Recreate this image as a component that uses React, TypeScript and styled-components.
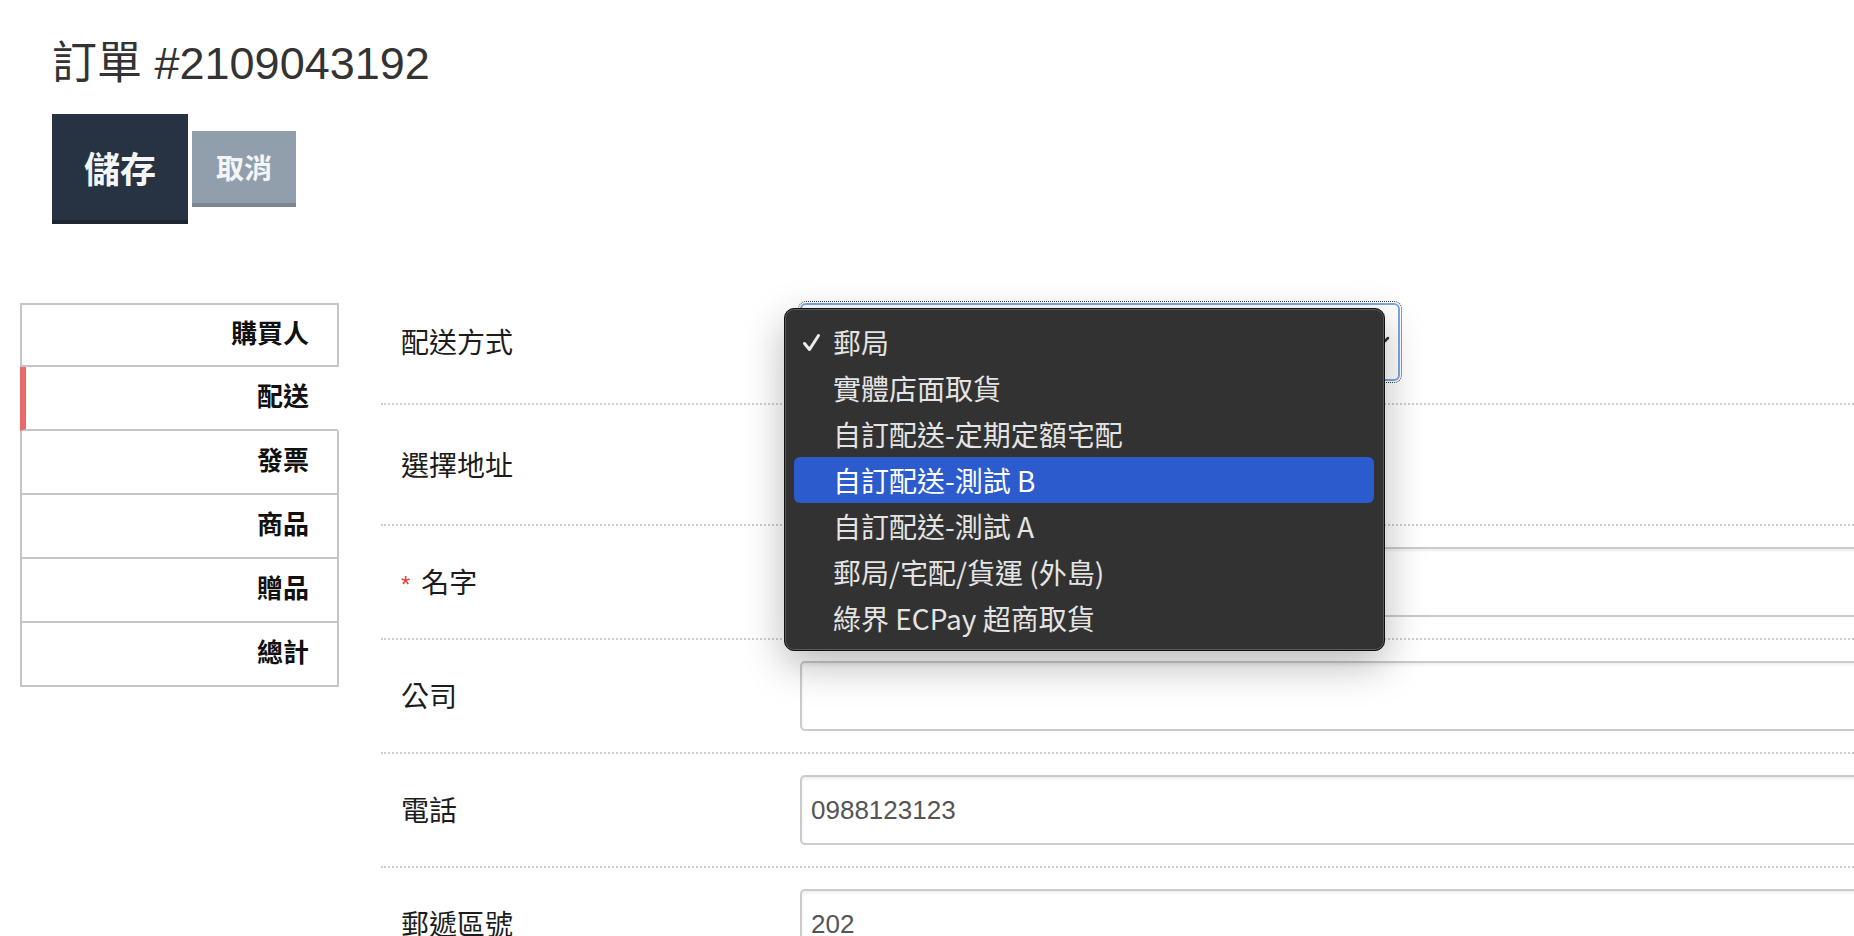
import React from 'react'
import styled, { createGlobalStyle, css } from 'styled-components'

//styling:
const GlobalStyle = createGlobalStyle`
  html, body {
    margin: 0;
    padding: 0;
    background: #fff;
    overflow: hidden;
  }
  body {
    font-family: "Liberation Sans", "Noto Sans CJK TC", sans-serif;
    color: #222;
  }
`
const Page = styled.div`
  width: 1854px;
  height: 936px;
  overflow: hidden;
`
const Header = styled.header`
  padding: 38px 0 0 52px;
`
const Title = styled.h1`
  margin: 0;
  font-size: 45px;
  line-height: 52px;
  font-weight: 400;
  color: #333;
`
const Actions = styled.div`
  display: flex;
  align-items: center;
  gap: 4px;
  margin-top: 24px;
`
const Button = styled.button<{ $primary?: boolean }>`
  box-sizing: border-box;
  display: flex;
  align-items: center;
  justify-content: center;
  border: none;
  padding: 0;
  font-family: "Noto Sans CJK TC", sans-serif;
  font-weight: 700;
  color: #f4f5f7;
  cursor: pointer;
  ${p => p.$primary ? css`
    width: 136px;
    height: 110px;
    font-size: 36px;
    background: #273342;
    border-bottom: 4px solid #1d2631;
  ` : css`
    width: 104px;
    height: 76px;
    font-size: 28px;
    background: #919fac;
    border-bottom: 4px solid #7b8692;
  `}
`
const Main = styled.main`
  display: flex;
  align-items: flex-start;
  margin-top: 79px;
`
const Tabs = styled.nav`
  flex: none;
  width: 319px;
  margin-left: 20px;
  display: flex;
  flex-direction: column;
`
const Tab = styled.div<{ $active?: boolean }>`
  box-sizing: border-box;
  height: 64px;
  display: flex;
  align-items: center;
  justify-content: flex-end;
  padding: 0 28px 8px 0;
  border: 2px solid #c5c5c5;
  border-top: none;
  font-family: "Noto Sans CJK TC", sans-serif;
  font-size: 26px;
  font-weight: 700;
  color: #111;
  &:first-child {
    border-top: 2px solid #c5c5c5;
  }
  ${p => p.$active && css`
    border-left: 6px solid #e96a6a;
    border-right-color: transparent;
  `}
`
const Form = styled.section`
  flex: none;
  width: 1600px;
  margin-left: 42px;
`
const Row = styled.div`
  display: flex;
  align-items: center;
  padding: 21px 0;
  border-bottom: 2px dotted #cdcdcd;
  &:first-child {
    padding-top: 0;
    padding-bottom: 22px;
  }
`
const Label = styled.div`
  flex: none;
  width: 399px;
  padding-left: 20px;
  font-family: "Noto Sans CJK TC", sans-serif;
  font-size: 28px;
  line-height: 1.2;
  color: #1c1c1c;
`
const Required = styled.span`
  font-family: "Liberation Sans", sans-serif;
  font-size: 24px;
  color: #e53b35;
  margin-right: 11px;
`
const TextInput = styled.input`
  box-sizing: border-box;
  width: 1100px;
  height: 70px;
  padding: 0 9px;
  border: 2px solid #cbcbcb;
  border-radius: 5px;
  box-shadow: inset 0 2px 3px rgba(0, 0, 0, 0.07);
  background: #fff;
  font-family: "Liberation Sans", sans-serif;
  font-size: 26px;
  color: #555;
  outline: none;
`
const SelectWrap = styled.div`
  position: relative;
`
const SelectBox = styled.div<{ $focused?: boolean; $width: number; $height: number }>`
  box-sizing: border-box;
  width: ${p => p.$width}px;
  height: ${p => p.$height}px;
  display: flex;
  align-items: center;
  justify-content: flex-end;
  padding: 0 8px 0 10px;
  border: 2px solid #cbcbcb;
  border-radius: 6px;
  background: #fff;
  ${p => p.$focused && css`
    border-color: #7aa8e4;
    outline: 1px dotted #3a3a3a;
    outline-offset: 1px;
  `}
`
const Popup = styled.ul`
  position: absolute;
  top: 5px;
  left: -16px;
  z-index: 10;
  box-sizing: border-box;
  width: 601px;
  margin: 0;
  padding: 10px 10px 9px 9px;
  list-style: none;
  background: #323232;
  border: 1px solid #0f0f0f;
  border-radius: 10px;
  box-shadow: inset 0 0 0 1px #5a5a5a, 0 14px 40px rgba(0, 0, 0, 0.28);
  font-family: "Noto Sans CJK TC", sans-serif;
`
const Option = styled.li<{ $highlighted?: boolean }>`
  display: flex;
  align-items: center;
  height: 46px;
  border-radius: 6px;
  font-size: 28px;
  line-height: 1;
  color: ${p => p.$highlighted ? '#fff' : '#e4e4e4'};
  background: ${p => p.$highlighted ? '#2b5bcd' : 'transparent'};
`
const CheckSlot = styled.span`
  box-sizing: border-box;
  flex: none;
  width: 39px;
  padding-left: 8px;
  display: flex;
  align-items: center;
`
/////////

const shippingOptions = [
  '郵局',
  '實體店面取貨',
  '自訂配送-定期定額宅配',
  '自訂配送-測試 B',
  '自訂配送-測試 A',
  '郵局/宅配/貨運 (外島)',
  '綠界 ECPay 超商取貨',
]
const tabs = ['購買人', '配送', '發票', '商品', '贈品', '總計']

const Check = () => (
  <svg width="19" height="19" viewBox="0 0 19 19">
    <path d="M2.5 10.5 L7.5 16.5 L16.5 2.5" fill="none" stroke="#ececec" strokeWidth="3" strokeLinecap="round" strokeLinejoin="round" />
  </svg>
)
const Chevron = () => (
  <svg width="20" height="12" viewBox="0 0 20 12">
    <path d="M2 2 L10 10 L18 2" fill="none" stroke="#333" strokeWidth="2.5" strokeLinecap="round" strokeLinejoin="round" />
  </svg>
)

export default function App() {
  const selected = 0
  const hovered = 3
  return (
    <Page>
      <GlobalStyle />
      <Header>
        <Title>訂單 #2109043192</Title>
        <Actions>
          <Button $primary>儲存</Button>
          <Button>取消</Button>
        </Actions>
      </Header>
      <Main>
        <Tabs>
          {tabs.map(t => <Tab key={t} $active={t === '配送'}>{t}</Tab>)}
        </Tabs>
        <Form>
          <Row>
            <Label>配送方式</Label>
            {/* the open popup covers the select's own value */}
            <SelectWrap>
              <SelectBox $focused $width={600} $height={78}>
                <Chevron />
              </SelectBox>
              <Popup>
                {shippingOptions.map((o, i) => (
                  <Option key={o} $highlighted={i === hovered}>
                    <CheckSlot>{i === selected ? <Check /> : null}</CheckSlot>
                    {o}
                  </Option>
                ))}
              </Popup>
            </SelectWrap>
          </Row>
          <Row>
            <Label>選擇地址</Label>
            <SelectBox $width={500} $height={77}>
              <Chevron />
            </SelectBox>
          </Row>
          <Row>
            <Label><Required>*</Required>名字</Label>
            <TextInput readOnly value="" />
          </Row>
          <Row>
            <Label>公司</Label>
            <TextInput readOnly value="" />
          </Row>
          <Row>
            <Label>電話</Label>
            <TextInput readOnly value="0988123123" />
          </Row>
          <Row>
            <Label>郵遞區號</Label>
            <TextInput readOnly value="202" />
          </Row>
        </Form>
      </Main>
    </Page>
  )
}
